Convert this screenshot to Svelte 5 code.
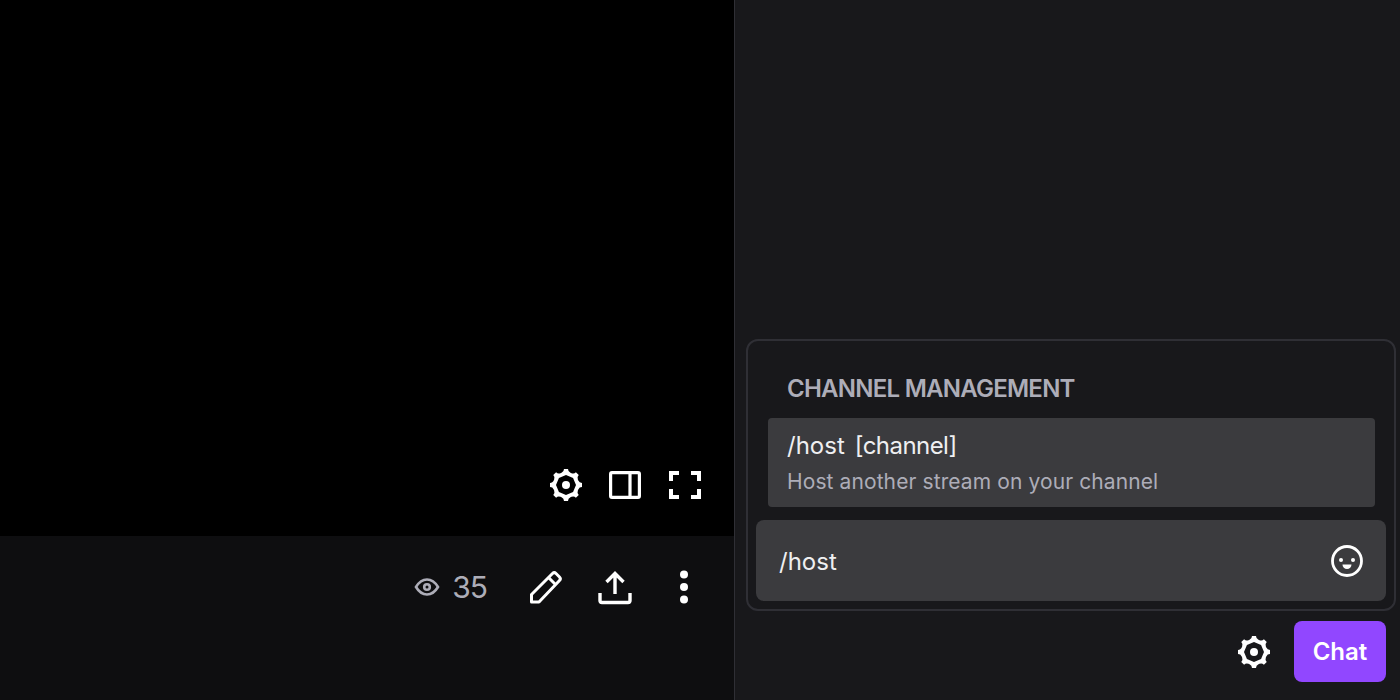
<script lang="ts">
  let draft = '/host';
</script>

{#snippet gear()}
  <svg width="40" height="40" viewBox="0 0 20 20" fill="currentColor" aria-hidden="true">
    <path d="M10 8a2 2 0 1 0 0 4 2 2 0 0 0 0-4z" />
    <path fill-rule="evenodd" d="M9 2h2a2.010 2.010 0 0 0 1.235 1.855l.53.22a2.010 2.010 0 0 0 2.185-.439l1.414 1.414a2.010 2.010 0 0 0-.439 2.185l.22.53A2.010 2.010 0 0 0 18 9v2a2.010 2.010 0 0 0-1.855 1.235l-.22.53a2.010 2.010 0 0 0 .44 2.185l-1.415 1.414a2.010 2.010 0 0 0-2.184-.439l-.531.22A2.010 2.010 0 0 0 11 18H9a2.010 2.010 0 0 0-1.235-1.854l-.53-.22a2.009 2.009 0 0 0-2.185.438L3.636 14.950a2.009 2.009 0 0 0 .438-2.184l-.22-.531A2.010 2.010 0 0 0 2 11V9c.809 0 1.545-.487 1.854-1.235l.22-.53a2.009 2.009 0 0 0-.438-2.185L5.050 3.636a2.010 2.010 0 0 0 2.185.438l.53-.22A2.010 2.010 0 0 0 9 2zm-4 8l1.464 3.536L10 15l3.535-1.464L15 10l-1.465-3.536L10 5 6.464 6.464 5 10z" />
  </svg>
{/snippet}

<div class="page">
  <main class="stage">
    <div class="video">
      <div class="player-controls">
        <button class="icon-btn" aria-label="Settings">{@render gear()}</button>
        <button class="icon-btn" aria-label="Theatre mode">
          <svg width="40" height="40" viewBox="0 0 20 20" fill="currentColor">
            <path fill-rule="evenodd" d="M3.500 3h13A1.500 1.500 0 0 1 18 4.500v11a1.500 1.500 0 0 1-1.500 1.500h-13A1.500 1.500 0 0 1 2 15.500v-11A1.500 1.500 0 0 1 3.500 3zm.1 1.600h8.100v10.800H3.600V4.600zm9.700 0h3.100v10.800h-3.100V4.600z" />
          </svg>
        </button>
        <button class="icon-btn" aria-label="Fullscreen">
          <svg width="40" height="40" viewBox="0 0 20 20" fill="currentColor">
            <path d="M7 3H2v5h2V5h3V3zm11 0h-5v2h3v3h2V3zm-5 14v-2h3v-3h2v5h-5zM2 17h5v-2H4v-3H2v5z" />
          </svg>
        </button>
      </div>
    </div>
    <div class="meta">
      <div class="viewers">
        <svg width="26" height="26" viewBox="0 0 26 26" fill="none" stroke="currentColor" stroke-width="2.6">
          <path d="M2 13c3-5 6.500-7.500 11-7.500S21 8 24 13c-3 5-6.500 7.500-11 7.500S5 18 2 13z" />
          <circle cx="13" cy="13" r="2.800" />
        </svg>
        <span>35</span>
      </div>
      <button class="icon-btn meta-btn" aria-label="Edit">
        <svg width="36" height="36" viewBox="0 0 36 36" fill="none" stroke="currentColor" stroke-width="3" stroke-linejoin="round">
          <path d="M3.500 33v-7.500L23 6l1.500-1.500a2.500 2.500 0 0 1 3.500 0l3.500 3.500a2.500 2.500 0 0 1 0 3.500L11 33z" />
          <path d="M20.500 8.500l7 7" />
        </svg>
      </button>
      <button class="icon-btn meta-btn" aria-label="Share">
        <svg width="36" height="36" viewBox="0 0 36 36" fill="none" stroke="currentColor" stroke-width="3.400">
          <path d="M18 25V5M9.500 13L18 4.500 26.500 13" />
          <path d="M3 24v7.500a2 2 0 0 0 2 2h26a2 2 0 0 0 2-2V24" />
        </svg>
      </button>
      <button class="icon-btn meta-btn" aria-label="More">
        <svg width="36" height="36" viewBox="0 0 36 36" fill="currentColor">
          <circle cx="18" cy="5.500" r="4" />
          <circle cx="18" cy="18" r="4" />
          <circle cx="18" cy="30.500" r="4" />
        </svg>
      </button>
    </div>
  </main>

  <aside class="chat">
    <div class="composer">
      <div class="suggest">
        <div class="suggest-title">CHANNEL MANAGEMENT</div>
        <div class="suggest-item">
          <div class="cmd">/host<span class="cmd-arg">[channel]</span></div>
          <div class="cmd-desc">Host another stream on your channel</div>
        </div>
      </div>
      <div class="input-row">
        <span class="draft">{draft}</span>
        <svg class="emote" width="34" height="34" viewBox="0 0 34 34" fill="none" stroke="currentColor" stroke-width="2.800">
          <circle cx="17" cy="17" r="14.500" />
          <circle cx="11" cy="16" r="2" fill="currentColor" stroke="none" />
          <circle cx="23" cy="16" r="2" fill="currentColor" stroke="none" />
          <path d="M12.500 20.500h9a4.500 4.500 0 0 1-9 0z" fill="currentColor" stroke="none" />
        </svg>
      </div>
    </div>
    <div class="chat-actions">
      <button class="icon-btn" aria-label="Chat settings">{@render gear()}</button>
      <button class="send">Chat</button>
    </div>
  </aside>
</div>

<style>
  :global(body) {
    margin: 0;
    background: #18181b;
    font-family: Inter, "Liberation Sans", sans-serif;
  }

  .page {
    display: flex;
    height: 700px;
    overflow: hidden;
  }

  .stage {
    width: 734px;
    flex-shrink: 0;
    display: flex;
    flex-direction: column;
    background: #0e0e10;
  }

  .video {
    height: 536px;
    background: #000;
    display: flex;
    align-items: flex-end;
    justify-content: flex-end;
  }

  .player-controls {
    display: flex;
    gap: 19.500px;
    padding: 0 29.500px 31px 0;
  }

  .icon-btn {
    display: flex;
    padding: 0;
    border: none;
    background: none;
    color: #fff;
  }

  .meta {
    display: flex;
    align-items: center;
    justify-content: flex-end;
    gap: 33px;
    height: 102px;
    padding-right: 32px;
  }

  .viewers {
    display: flex;
    align-items: center;
    gap: 12px;
    margin-right: 8px;
    color: #adadb8;
    font-size: 30px;
    line-height: 36px;
    letter-spacing: -1px;
  }

  .chat {
    flex: 1;
    min-width: 0;
    display: flex;
    flex-direction: column;
    justify-content: flex-end;
    box-sizing: border-box;
    border-left: 1px solid #2f2f35;
    padding: 0 4px 18px 11px;
    background: #18181b;
  }

  .composer {
    box-sizing: border-box;
    height: 272px;
    margin-bottom: 10px;
    padding: 0 8px 8px;
    border: 2px solid #2f2f35;
    border-radius: 12px;
    display: flex;
    flex-direction: column;
    justify-content: flex-end;
  }

  .suggest {
    padding: 0 11px 13px 12px;
  }

  .suggest-title {
    padding: 0 19px 14px;
    color: #adadb8;
    font-size: 24px;
    font-weight: 600;
    line-height: 30px;
    letter-spacing: -0.75px;
  }

  .suggest-item {
    box-sizing: border-box;
    height: 89px;
    padding: 13px 19px;
    background: #3b3b3e;
    border-radius: 4px;
  }

  .cmd {
    color: #efeff1;
    font-size: 24px;
    line-height: 30px;
  }

  .cmd-arg {
    margin-left: 10px;
    letter-spacing: -0.55px;
  }

  .cmd-desc {
    margin-top: 6px;
    color: #adadb8;
    font-size: 21px;
    line-height: 30px;
    letter-spacing: 0.1px;
  }

  .input-row {
    box-sizing: border-box;
    height: 81px;
    display: flex;
    align-items: center;
    justify-content: space-between;
    padding: 0 22px 0 23px;
    background: #3b3b3e;
    border-radius: 8px;
    color: #efeff1;
  }

  .draft {
    font-size: 24px;
    line-height: 30px;
    padding-top: 2px;
  }

  .emote {
    color: #fff;
  }

  .chat-actions {
    display: flex;
    align-items: center;
    justify-content: flex-end;
    gap: 20px;
    padding-right: 10px;
  }

  .send {
    width: 92px;
    height: 61px;
    border: none;
    border-radius: 8px;
    background: #9147ff;
    color: #fff;
    font-family: inherit;
    font-size: 24px;
    font-weight: 600;
  }
</style>
